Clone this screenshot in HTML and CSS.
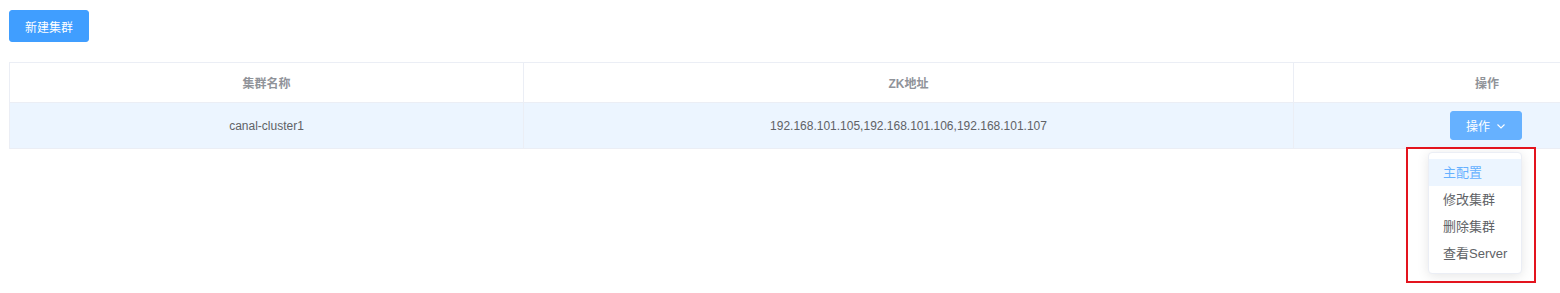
FILE: index.html
```html
<!DOCTYPE html>
<html lang="zh-CN">
<head>
<meta charset="utf-8">
<title>集群</title>
<link rel="stylesheet" href="styles.css">
</head>
<body>
<div class="page">
  <div class="toolbar">
    <button class="btn btn-primary">新建集群</button>
  </div>
  <div class="table-wrap">
    <table class="grid">
      <colgroup>
        <col class="c1"><col class="c2"><col class="c3">
      </colgroup>
      <thead>
        <tr><th>集群名称</th><th>ZK地址</th><th>操作</th></tr>
      </thead>
      <tbody>
        <tr class="hover">
          <td>canal-cluster1</td>
          <td>192.168.101.105,192.168.101.106,192.168.101.107</td>
          <td>
            <button class="btn btn-op">操作<svg class="chev" viewBox="0 0 12 12" width="12" height="12"><path d="M2.5 4.5 L6 8 L9.5 4.5" fill="none" stroke="#fff" stroke-width="1.1"/></svg></button>
          </td>
        </tr>
      </tbody>
    </table>
  </div>
</div>
<ul class="menu">
  <li class="active">主配置</li>
  <li>修改集群</li>
  <li>删除集群</li>
  <li>查看Server</li>
</ul>
<div class="mark"></div>
</body>
</html>
```
FILE: styles.css
```css
html, body {
  margin: 0;
  padding: 0;
  background: #fff;
  overflow: hidden;
  width: 1560px;
  height: 293px;
  font-family: "Liberation Sans", "Noto Sans CJK SC", Arial, sans-serif;
  color: #606266;
}
.page {
  padding: 10px 0 0 9px;
}
.toolbar {
  height: 32px;
  margin-bottom: 20px;
}
.btn {
  border: 1px solid transparent;
  border-radius: 3px;
  font-family: inherit;
  font-size: 12px;
  color: #fff;
  cursor: pointer;
  display: inline-flex;
  align-items: center;
  justify-content: center;
  box-sizing: border-box;
}
.btn-primary {
  width: 80px;
  height: 32px;
  background: #409eff;
  border-color: #409eff;
}
.btn-op {
  width: 72px;
  height: 29px;
  background: #66b1ff;
  border-color: #66b1ff;
  gap: 5px;
  padding: 0 0 0 2px;
  margin-right: 3px;
}
.chev { display: block; }
.table-wrap {
  width: 1551px;
  overflow: hidden;
}
.grid {
  border-collapse: collapse;
  table-layout: fixed;
  width: 1671px;
  font-size: 12px;
}
.c1 { width: 514px; }
.c2 { width: 770px; }
.c3 { width: 387px; }
.grid th, .grid td {
  border: 1px solid #ebeef5;
  text-align: center;
  padding: 0;
}
.grid th {
  height: 39px;
  color: #909399;
  font-weight: bold;
}
.grid td {
  height: 45px;
  color: #606266;
}
.grid tr.hover td {
  background: #ecf5ff;
}
.menu {
  position: absolute;
  left: 1428px;
  top: 152px;
  width: 94px;
  margin: 0;
  padding: 6px 0;
  list-style: none;
  background: #fff;
  border: 1px solid #ebeef5;
  border-radius: 4px;
  box-shadow: 0 2px 12px 0 rgba(0, 0, 0, 0.1);
  box-sizing: border-box;
  font-size: 13px;
}
.menu li {
  line-height: 27px;
  padding: 0 14px;
  color: #606266;
  white-space: nowrap;
}
.menu li.active {
  background: #ecf5ff;
  color: #66b1ff;
}
.mark {
  position: absolute;
  left: 1406px;
  top: 147px;
  width: 130px;
  height: 136px;
  border: 2px solid #e3141e;
  box-sizing: border-box;
  pointer-events: none;
}
```
